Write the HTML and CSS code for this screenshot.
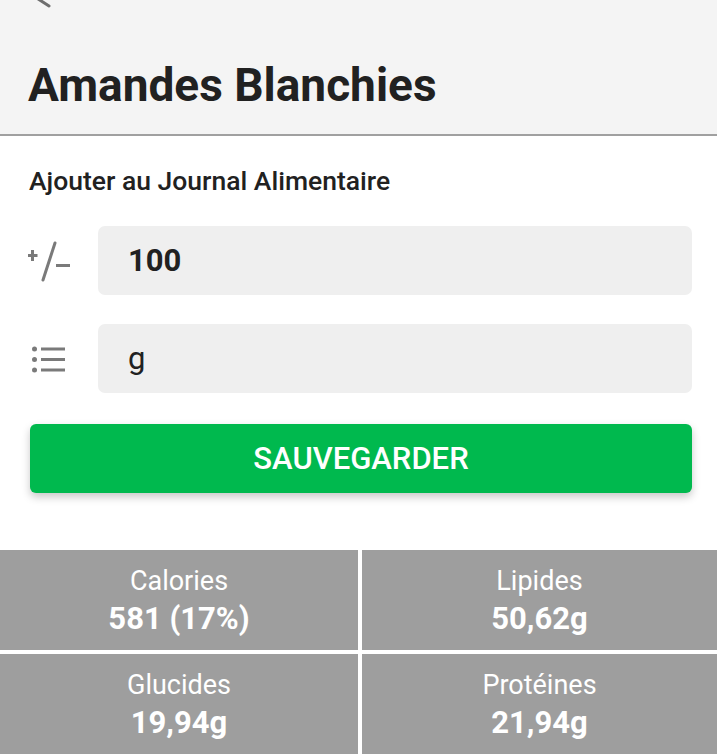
FILE: index.html
```html
<!DOCTYPE html>
<html lang="fr">
<head>
<meta charset="utf-8">
<link rel="stylesheet" href="styles.css">
</head>
<body>
<header class="header">
  <div class="toolbar">
    <svg class="back" width="60" height="8" viewBox="0 0 60 8"><path d="M32 -5 L49 6" stroke="#6e6e6e" stroke-width="3" stroke-linecap="round" fill="none"/></svg>
  </div>
  <h1 class="title">Amandes Blanchies</h1>
</header>
<main class="form">
  <h2 class="section-title">Ajouter au Journal Alimentaire</h2>
  <div class="field-row">
    <div class="field-icon">
      <svg width="44" height="56" viewBox="0 0 44 56">
        <path d="M1 22.5 H10.5 M5.5 17 V28" stroke="#7a7a7a" stroke-width="3" fill="none"/>
        <path d="M28 10 L16 47" stroke="#7a7a7a" stroke-width="3" stroke-linecap="round" fill="none"/>
        <path d="M29 32.5 H43" stroke="#7a7a7a" stroke-width="3" fill="none"/>
      </svg>
    </div>
    <div class="field"><span class="field-value bold">100</span></div>
  </div>
  <div class="field-row">
    <div class="field-icon">
      <svg width="44" height="56" viewBox="0 0 44 56">
        <circle cx="7.5" cy="18" r="2.5" fill="#7a7a7a"/>
        <circle cx="7.5" cy="28.5" r="2.5" fill="#7a7a7a"/>
        <circle cx="7.5" cy="39" r="2.5" fill="#7a7a7a"/>
        <path d="M14 18 H38 M14 28.5 H38 M14 39 H38" stroke="#7a7a7a" stroke-width="3" fill="none"/>
      </svg>
    </div>
    <div class="field"><span class="field-value">g</span></div>
  </div>
  <button class="save">SAUVEGARDER</button>
</main>
<section class="stats">
  <div class="stat"><div class="stat-label">Calories</div><div class="stat-value">581 (17%)</div></div>
  <div class="stat"><div class="stat-label">Lipides</div><div class="stat-value">50,62g</div></div>
  <div class="stat"><div class="stat-label">Glucides</div><div class="stat-value">19,94g</div></div>
  <div class="stat"><div class="stat-label">Protéines</div><div class="stat-value">21,94g</div></div>
</section>
</body>
</html>
```
FILE: styles.css
```css
* { box-sizing: border-box; }
html, body { margin: 0; padding: 0; }
body {
  width: 717px;
  height: 755px;
  overflow: hidden;
  background: #ffffff;
  font-family: Roboto, "Liberation Sans", sans-serif;
  color: #212121;
}
.header {
  background: #f4f4f4;
  height: 136px;
  border-bottom: 2px solid #a0a0a0;
}
.toolbar { height: 8px; }
.back { display: block; overflow: visible; }
.title {
  margin: 0;
  padding: 47px 0 0 28px;
  font-size: 46px;
  line-height: 60px;
  font-weight: 700;
  color: #212121;
}
.form {
  padding: 27px 25px 0 30px;
  height: 414px;
}
.section-title {
  margin: 0;
  font-size: 26.5px;
  font-weight: 500;
  line-height: 36px;
  color: #212121;
  margin-left: -1px;
}
.field-row {
  display: flex;
  align-items: center;
  margin-top: 27px;
  height: 69px;
}
.field-row + .field-row { margin-top: 29px; }
.field-icon {
  width: 71px;
  display: flex;
  align-items: center;
  margin-left: -3px;
}
.field-icon svg { display: block; }
.field {
  flex: 1;
  height: 69px;
  background: #efefef;
  border-radius: 7px;
  display: flex;
  align-items: center;
  padding-left: 30px;
}
.field-value {
  font-size: 31px;
  color: #212121;
}
.field-value.bold { font-weight: 700; }
.save {
  display: block;
  width: 662px;
  height: 69px;
  margin: 31px 0 0 0;
  border: none;
  border-radius: 6px;
  background: #00b94e;
  color: #ffffff;
  font-family: Roboto, "Liberation Sans", sans-serif;
  font-size: 31px;
  font-weight: 500;
  box-shadow: 0 4px 8px rgba(0,0,0,0.22);
}
.stats {
  display: grid;
  grid-template-columns: 358px 1fr;
  grid-auto-rows: 100px;
  gap: 4px;
}
.stat {
  background: #9e9e9e;
  color: #ffffff;
  text-align: center;
  padding-top: 14px;
}
.stat-label {
  font-size: 27px;
  line-height: 34px;
}
.stat-value {
  font-size: 31px;
  font-weight: 700;
  line-height: 42px;
}
```
